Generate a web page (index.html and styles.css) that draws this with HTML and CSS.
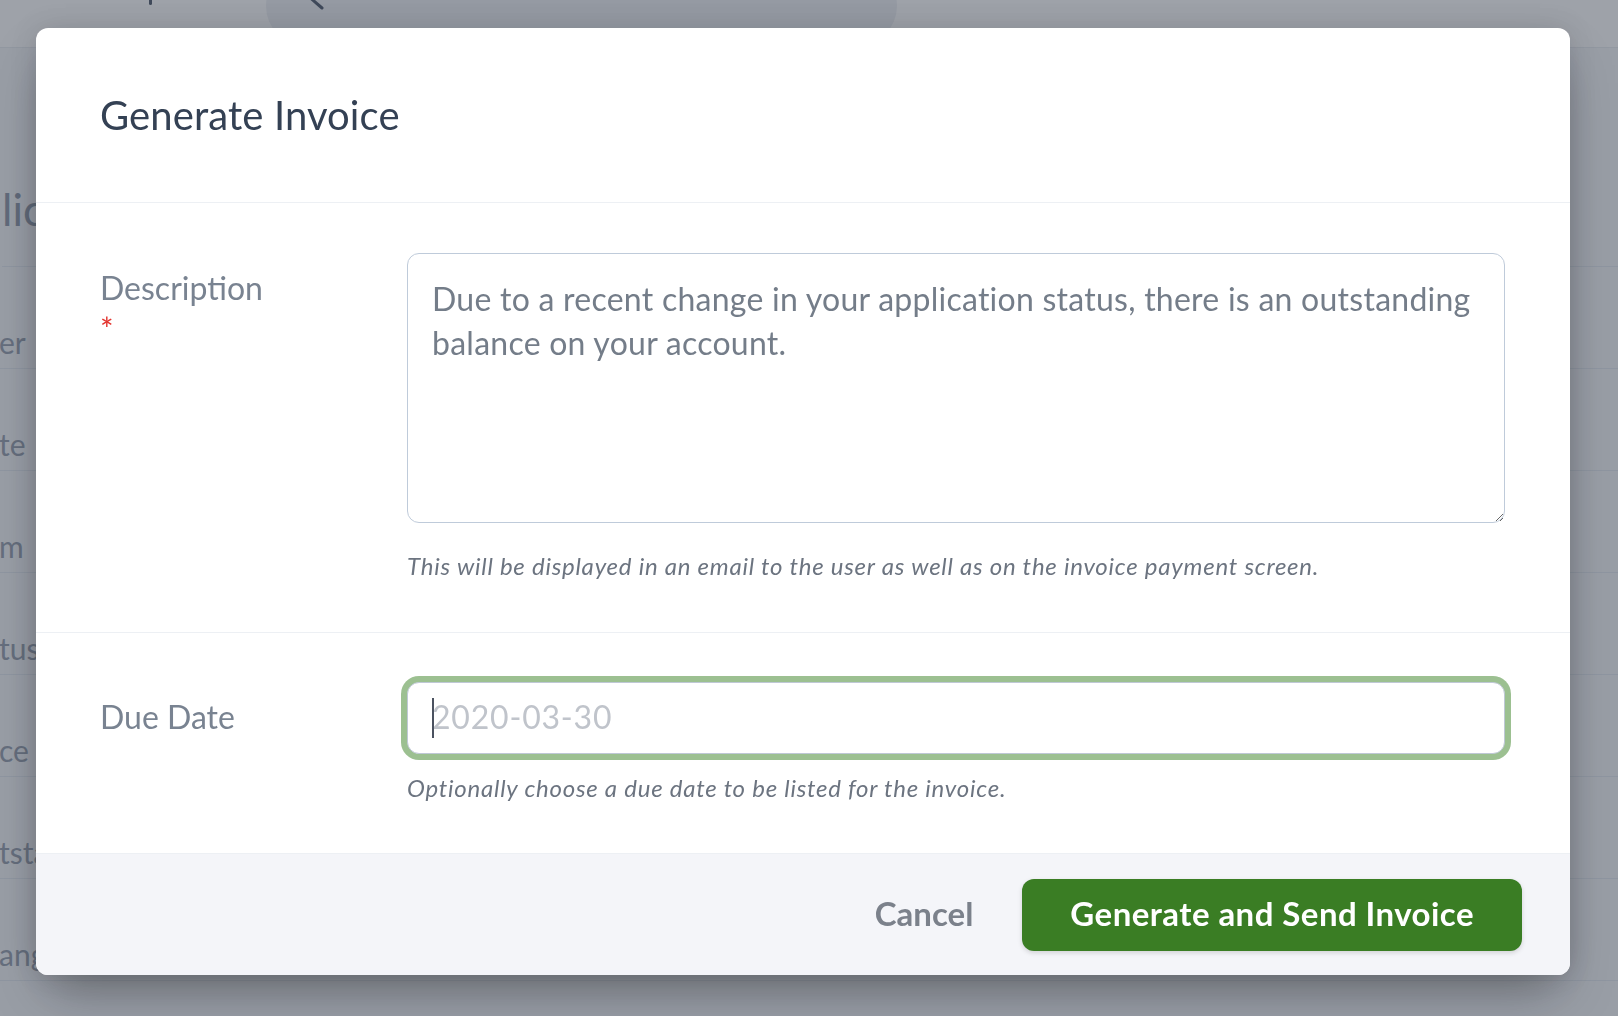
FILE: index.html
```html
<!DOCTYPE html>
<html lang="en">
<head>
<meta charset="utf-8">
<title>Generate Invoice</title>
<link rel="stylesheet" href="styles.css">
</head>
<body>
<div class="page">
  <header class="topbar">
    <span class="nav-mark"></span>
    <div class="search">
      <svg class="search-icon" width="34" height="40" viewBox="0 0 34 40" aria-hidden="true">
        <circle cx="4" cy="14" r="9" fill="none" stroke="#4a5568" stroke-width="3"/>
        <line x1="11" y1="21" x2="26" y2="34" stroke="#4a5568" stroke-width="3" stroke-linecap="round"/>
      </svg>
    </div>
  </header>
  <main class="page-main">
    <h1 class="page-title">lication</h1>
    <div class="rows">
      <div class="row">er</div>
      <div class="row">te</div>
      <div class="row">m</div>
      <div class="row">tus</div>
      <div class="row">ce</div>
      <div class="row">tsta</div>
      <div class="row">ang</div>
    </div>
  </main>
</div>

<div class="overlay">
  <div class="modal">
    <div class="modal-header">
      <h2 class="modal-title">Generate Invoice</h2>
    </div>

    <div class="modal-section section-desc">
      <div class="field-label">
        Description
        <span class="req">*</span>
      </div>
      <div class="field-control">
        <textarea class="textarea">Due to a recent change in your application status, there is an outstanding balance on your account.</textarea>
        <p class="help help-desc">This will be displayed in an email to the user as well as on the invoice payment screen.</p>
      </div>
    </div>

    <div class="modal-section section-date">
      <div class="field-label">Due Date</div>
      <div class="field-control">
        <div class="date-wrap">
          <input class="date-input" type="text" placeholder="2020-03-30">
          <span class="caret"></span>
        </div>
        <p class="help help-date">Optionally choose a due date to be listed for the invoice.</p>
      </div>
    </div>

    <div class="modal-footer">
      <button class="btn-cancel" type="button">Cancel</button>
      <button class="btn-primary" type="button">Generate and Send Invoice</button>
    </div>
  </div>
</div>
</body>
</html>
```
FILE: styles.css
```css
* { box-sizing: border-box; }

html, body {
  margin: 0;
  padding: 0;
}

body {
  width: 1618px;
  height: 1016px;
  overflow: hidden;
  font-family: Lato, "Noto Sans", "DejaVu Sans", sans-serif;
  background: #f5f7fa;
}

/* ---------- underlying page ---------- */
.page {
  height: 1016px;
  overflow: hidden;
}

.topbar {
  height: 48px;
  background: #ffffff;
  display: flex;
  align-items: flex-start;
  border-bottom: 1px solid #e8ebf0;
}

.nav-mark {
  width: 3px;
  height: 5px;
  margin-left: 149px;
  background: #4a5568;
  border-radius: 0 0 2px 2px;
}

.search {
  width: 631px;
  height: 80px;
  margin-top: -34px;
  margin-left: 114px;
  border-radius: 40px;
  background: #eef0f4;
  padding: 8px 0 0 30px;
}

.search-icon {
  display: block;
}

.page-main {
  padding-top: 135px;
}

.page-title {
  margin: 0 0 0 2px;
  font-size: 44px;
  line-height: 53px;
  font-weight: 400;
  color: #8a95a6;
  padding-bottom: 30px;
  border-bottom: 1px solid #e2e8f0;
}

.row {
  height: 102px;
  padding: 55px 0 0 0;
  font-size: 30px;
  line-height: 40px;
  color: #939cac;
  border-bottom: 1px solid #e2e8f0;
  margin-left: -1px;
}

/* ---------- modal ---------- */
.overlay {
  position: fixed;
  inset: 0;
  background: rgba(52, 60, 75, 0.48);
  padding: 28px 0 0 36px;
}

.modal {
  width: 1534px;
  background: #ffffff;
  border-radius: 12px;
  overflow: hidden;
  box-shadow: 0 25px 50px -12px rgba(0, 0, 0, 0.35), 0 0 28px rgba(0, 0, 0, 0.12);
}

.modal-header {
  padding: 64px 64px 64px;
  border-bottom: 1px solid #edf0f4;
}

.modal-title {
  margin: 0;
  font-size: 40px;
  line-height: 46px;
  font-weight: 400;
  color: #344154;
  letter-spacing: 0.1px;
}

.modal-section {
  display: grid;
  grid-template-columns: 307px 1fr;
  border-bottom: 1px solid #edf0f4;
}

.section-desc {
  padding: 50px 65px 50px 64px;
}

.section-date {
  padding: 49px 65px 49px 64px;
}

.field-label {
  padding-top: 12px;
  font-size: 32px;
  line-height: 46px;
  color: #798391;
}

.req {
  display: block;
  margin-top: 2px;
  font-size: 32px;
  line-height: 32px;
  color: #e3342f;
}

.field-control {
  min-width: 0;
}

.textarea {
  display: block;
  width: 100%;
  height: 270px;
  margin: 0;
  padding: 23px 24px;
  border: 1px solid #bfcbda;
  border-radius: 12px;
  font-family: inherit;
  font-size: 32px;
  letter-spacing: 0.25px;
  line-height: 44px;
  color: #747d89;
  background: #fff;
  resize: vertical;
  outline: none;
}

.date-wrap {
  position: relative;
}

.date-input {
  display: block;
  width: 100%;
  height: 72px;
  margin: 0;
  padding: 0 24px 3px;
  border: 1px solid #bfc8d6;
  border-radius: 12px;
  font-family: inherit;
  font-size: 32px;
  letter-spacing: 0.8px;
  color: #747d89;
  background: #fff;
  outline: none;
  box-shadow: 0 0 0 6px #9cc091;
}

.date-input::placeholder {
  color: #c0c4cb;
}

.caret {
  position: absolute;
  left: 25px;
  top: 16px;
  width: 2px;
  height: 40px;
  background: #4b5260;
}

.help {
  margin: 0;
  font-size: 24px;
  letter-spacing: 0.75px;
  line-height: 32px;
  font-style: italic;
  color: #6c7480;
}

.help-desc { margin-top: 27px; }
.help-date { margin-top: 18px; }

.modal-footer {
  display: flex;
  justify-content: flex-end;
  align-items: center;
  padding: 25px 48px 24px;
  background: #f4f5f9;
}

.btn-cancel {
  margin: 0 49px 0 0;
  padding: 0 0 5px;
  border: none;
  background: none;
  font-family: inherit;
  font-size: 33px;
  font-weight: 700;
  line-height: 46px;
  color: #7b818b;
}

.btn-primary {
  margin: 0;
  padding: 11px 48px 15px;
  border: none;
  border-radius: 12px;
  background: #3a7d24;
  color: #ffffff;
  font-family: inherit;
  font-size: 33px;
  letter-spacing: 0.45px;
  font-weight: 700;
  line-height: 46px;
  box-shadow: 0 2px 5px rgba(0, 0, 0, 0.14);
}
```
